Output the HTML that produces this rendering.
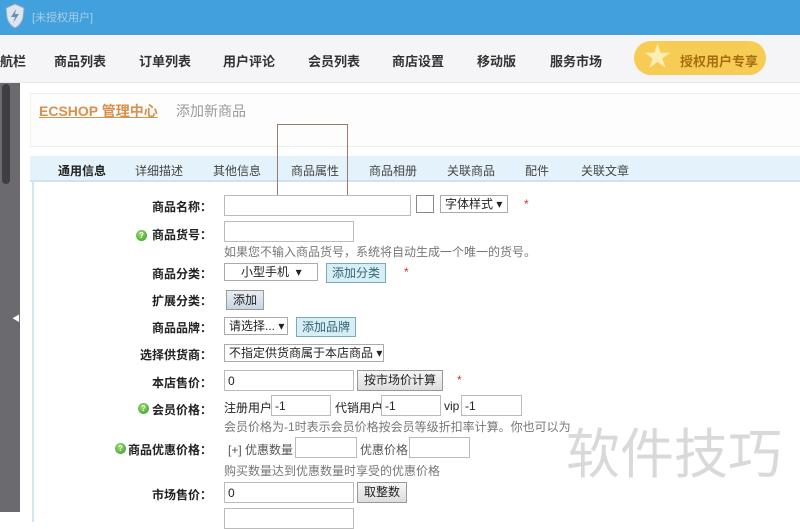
<!DOCTYPE html>
<html><head><meta charset="utf-8"><style>
*{margin:0;padding:0;box-sizing:border-box}
body{width:800px;height:512px;overflow:hidden;background:#fff;font-family:"Liberation Sans","Noto Sans CJK SC",sans-serif;font-size:12px;color:#222;position:relative}
.a{position:absolute;white-space:nowrap}
.top{left:0;top:0;width:800px;height:35px;background:#42a0dc}
.nav{left:0;top:35px;width:800px;height:48px;background:#f5f5f7;border-bottom:1px solid #e8e8e8}
.nav span{position:absolute;top:16px;font-size:13px;font-weight:bold;color:#333}
.side{left:0;top:83px;width:20px;height:429px;background:#6b6a6e}
.hdr{left:30px;top:93px;width:780px;height:54px;border:1px solid #eee;background:#fdfdfd}
.tabs{left:30px;top:156px;width:780px;height:26px;background:#e4f3fb;border-bottom:2px solid #cfe3ee}
.tabs span{position:absolute;top:6px;font-size:12px;color:#444}
.panel{left:32px;top:182px;width:770px;height:340px;border-left:2px solid #d3e6ef;background:#fff}
.lbl{font-weight:bold;font-size:12px;color:#222}
.in,.btn,.btnb,.sel{position:absolute;white-space:nowrap;overflow:hidden;line-height:14px}
.in{border:1px solid #bbb;background:#fff;height:21px;font-size:12px;padding:3px 3px}
.btn{border:1px solid #999;background:linear-gradient(#f6f6f6,#ddd);height:20px;font-size:12px;padding:2px 6px}
.btnb{border:1px solid #7ab;background:#d7eef6;height:20px;font-size:12px;padding:2px 5px;color:#367}
.sel{border:1px solid #aaa;background:#fff;height:18px;font-size:12px;padding:1px 4px}
.hint{font-size:12px;color:#777}
.q{position:absolute;width:11px;height:11px;border-radius:50%;background:radial-gradient(circle at 40% 35%,#9d6,#393);color:#fff;font-size:8px;line-height:11px;text-align:center;font-weight:bold}
.star{color:#c33;font-size:12px}
</style></head><body>
<div class="a top"></div>
<svg class="a" style="left:4px;top:3px" width="22" height="26" viewBox="0 0 22 26"><path d="M11 1 L20 5 L19 15 Q17 22 11 25 Q5 22 3 15 L2 5Z" fill="#dde6ee" stroke="#9ab" stroke-width="1"/><path d="M12 6 L7 14 L11 14 L9 20 L15 11 L11 11Z" fill="#6a8fb0"/></svg>
<div class="a" style="left:32px;top:9px;font-size:11px;color:#a9cfe8">[未授权用户]</div>
<div class="a nav">
<span style="left:0">航栏</span><span style="left:54px">商品列表</span><span style="left:139px">订单列表</span><span style="left:223px">用户评论</span><span style="left:308px">会员列表</span><span style="left:392px">商店设置</span><span style="left:477px">移动版</span><span style="left:550px">服务市场</span>
</div>
<div class="a" style="left:634px;top:41px;width:132px;height:34px;border-radius:17px;background:#f7cc55"></div>
<div class="a" style="left:644px;top:43px;font-size:27px;color:#fbeeb4;line-height:28px">★</div>
<div class="a" style="left:680px;top:51px;font-size:13px;font-weight:bold;color:#a86d10">授权用户专享</div>
<div class="a side"></div>
<div class="a" style="left:2px;top:84px;width:8px;height:100px;border-radius:4px;background:#3f3e42"></div>
<div class="a" style="left:12px;top:313px;font-size:8px;color:#fff">◀</div>
<div class="a hdr"></div>
<div class="a" style="left:39px;top:101px;font-size:14px;font-weight:bold;color:#d9904a;text-decoration:underline">ECSHOP 管理中心</div>
<div class="a" style="left:176px;top:101px;font-size:14px;color:#999">添加新商品</div>
<div class="a tabs">
<span style="left:28px;font-weight:bold;color:#222">通用信息</span><span style="left:105px">详细描述</span><span style="left:183px">其他信息</span><span style="left:261px">商品属性</span><span style="left:339px">商品相册</span><span style="left:417px">关联商品</span><span style="left:495px">配件</span><span style="left:551px">关联文章</span>
</div>
<div class="a panel"></div>
<div class="a" style="left:277px;top:124px;width:71px;height:81px;border:1px solid #9a7a70"></div>

<div class="a lbl" style="left:152px;top:198px">商品名称：</div>
<div class="in" style="left:224px;top:195px;width:187px"></div>
<div class="a" style="left:416px;top:195px;width:18px;height:18px;border:1px solid #888;background:#fff"></div>
<div class="sel" style="left:440px;top:195px;width:68px">字体样式 ▾</div>
<div class="a star" style="left:524px;top:197px">*</div>

<div class="q" style="left:136px;top:230px">?</div>
<div class="a lbl" style="left:152px;top:226px">商品货号：</div>
<div class="in" style="left:224px;top:221px;width:130px"></div>
<div class="a hint" style="left:224px;top:243px">如果您不输入商品货号，系统将自动生成一个唯一的货号。</div>

<div class="a lbl" style="left:152px;top:265px">商品分类：</div>
<div class="sel" style="left:224px;top:263px;width:94px;padding-left:16px">小型手机 &nbsp;▾</div>
<div class="btnb" style="left:326px;top:263px">添加分类</div>
<div class="a star" style="left:404px;top:265px">*</div>

<div class="a lbl" style="left:152px;top:292px">扩展分类：</div>
<div class="btn" style="left:226px;top:290px;background:linear-gradient(#e8eef6,#c9d4e2)">添加</div>

<div class="a lbl" style="left:152px;top:319px">商品品牌：</div>
<div class="sel" style="left:224px;top:317px;width:64px">请选择... ▾</div>
<div class="btnb" style="left:296px;top:317px">添加品牌</div>

<div class="a lbl" style="left:140px;top:346px">选择供货商：</div>
<div class="sel" style="left:224px;top:344px;width:160px">不指定供货商属于本店商品 ▾</div>

<div class="a lbl" style="left:152px;top:374px">本店售价：</div>
<div class="in" style="left:224px;top:370px;width:130px">0</div>
<div class="btn" style="left:357px;top:370px;height:21px">按市场价计算</div>
<div class="a star" style="left:457px;top:373px">*</div>

<div class="q" style="left:138px;top:403px">?</div>
<div class="a lbl" style="left:152px;top:401px">会员价格：</div>
<div class="a" style="left:224px;top:399px">注册用户</div>
<div class="in" style="left:271px;top:395px;width:60px">-1</div>
<div class="a" style="left:335px;top:399px">代销用户</div>
<div class="in" style="left:381px;top:395px;width:60px">-1</div>
<div class="a" style="left:444px;top:399px">vip</div>
<div class="in" style="left:461px;top:395px;width:61px">-1</div>
<div class="a hint" style="left:224px;top:418px">会员价格为-1时表示会员价格按会员等级折扣率计算。你也可以为</div>

<div class="q" style="left:115px;top:443px">?</div>
<div class="a lbl" style="left:128px;top:441px">商品优惠价格：</div>
<div class="a" style="left:228px;top:441px;color:#555">[+] 优惠数量</div>
<div class="in" style="left:295px;top:437px;width:62px"></div>
<div class="a" style="left:360px;top:441px;color:#555">优惠价格</div>
<div class="in" style="left:409px;top:437px;width:61px"></div>
<div class="a hint" style="left:224px;top:462px">购买数量达到优惠数量时享受的优惠价格</div>

<div class="a lbl" style="left:152px;top:486px">市场售价：</div>
<div class="in" style="left:224px;top:482px;width:130px">0</div>
<div class="btn" style="left:357px;top:482px;height:21px">取整数</div>
<div class="in" style="left:224px;top:508px;width:130px"></div>

<div class="a" style="left:566px;top:420px;font-size:54px;color:#d9d9d9;letter-spacing:0px;font-family:'Noto Sans CJK SC',sans-serif;line-height:60px">软件技巧</div>
</body></html>
